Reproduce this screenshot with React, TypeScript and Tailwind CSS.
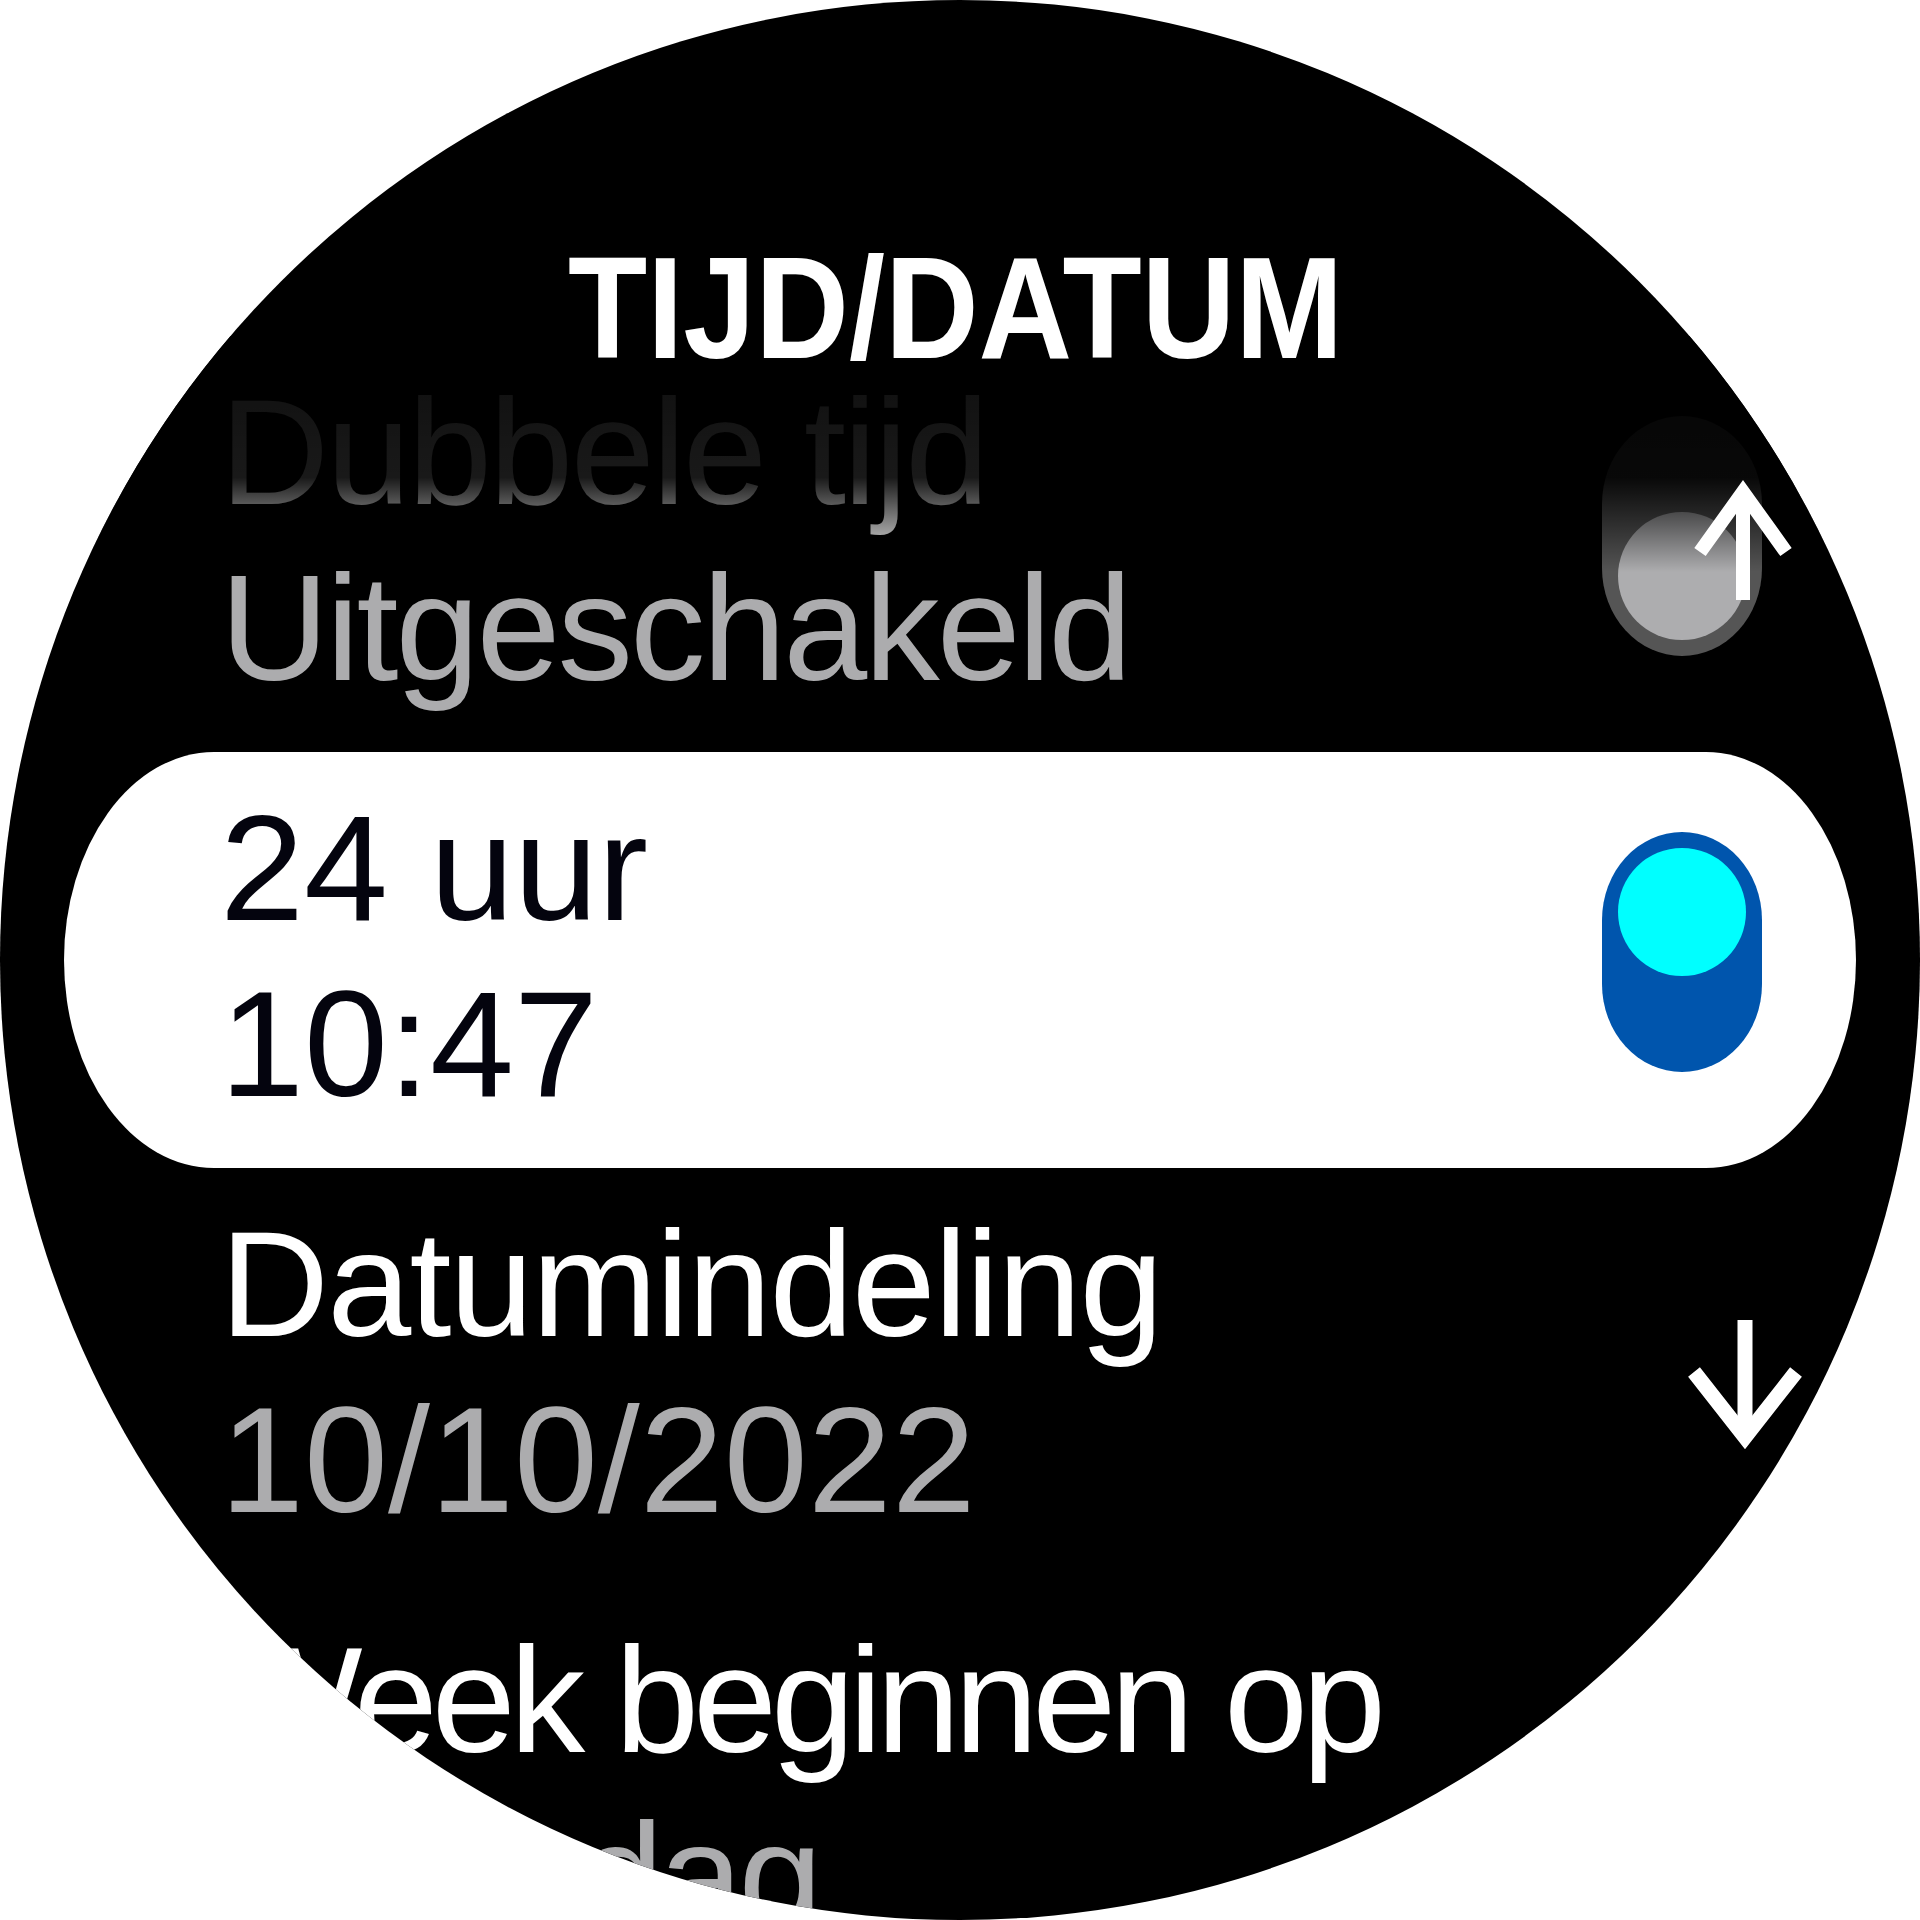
import type { ReactNode } from "react";

type Item = {
    title: string;
    value: string;
    toggle?: "on" | "off";
    selected?: boolean;
    titleTracking?: string;
    valueTracking?: string;
};

const items: Item[] = [
    { title: "Dubbele tijd", value: "Uitgeschakeld", toggle: "off", titleTracking: "tracking-[-0.017em]", valueTracking: "tracking-[-0.02em]" },
    { title: "24 uur", value: "10:47", toggle: "on", selected: true },
    { title: "Datumindeling", value: "10/10/2022", titleTracking: "tracking-[-0.012em]" },
    { title: "Week beginnen op", value: "Maandag", titleTracking: "tracking-[-0.04em]", valueTracking: "tracking-[-0.03em]" },
];

function Toggle({ on }: { on: boolean }) {
    if (on) {
        return (
            <div className="mb-[8px] flex h-[240px] w-[160px] shrink-0 flex-col justify-start rounded-[80px_/_88px] bg-[#0055ad] p-[16px]">
                <div className="h-[128px] w-[128px] rounded-full bg-[#00ffff]" />
            </div>
        );
    }
    return (
        <div className="mb-[8px] flex h-[240px] w-[160px] shrink-0 flex-col justify-end rounded-[80px_/_88px] bg-[#555555] p-[16px]">
            <div className="h-[128px] w-[128px] rounded-full bg-[#adadaf]" />
        </div>
    );
}

function Row({ item }: { item: Item }) {
    const main = item.selected ? "text-[#04040e]" : "text-white";
    const sub = item.selected ? "text-[#04040e]" : "text-[#acacae]";
    return (
        <div
            className={`flex h-[416px] items-center justify-between pt-[28px] pb-[36px] pl-[156px] pr-[94px] ${
                item.selected ? "rounded-[150px_/_208px] bg-white" : ""
            }`}
        >
            <div className="whitespace-nowrap text-[151px] leading-[176px]">
                <div className={`${main} ${item.titleTracking ?? ""}`}>{item.title}</div>
                <div className={`${sub} ${item.valueTracking ?? ""}`}>{item.value}</div>
            </div>
            {item.toggle && <Toggle on={item.toggle === "on"} />}
        </div>
    );
}

function Arrow({ className, children }: { className: string; children: ReactNode }) {
    return (
        <svg className={`absolute z-20 ${className}`} width="130" height="150" viewBox="0 0 130 150" fill="none">
            {children}
        </svg>
    );
}

export default function App() {
    return (
        <div className="h-[1920px] w-[1920px] bg-white">
            <div className="relative h-full w-full overflow-hidden rounded-full bg-black font-['Liberation_Sans',Arial,sans-serif]">
                <header className="relative z-20 h-[336px] pt-[237px] pr-[8px] text-center">
                    <h1 className="inline-block scale-x-[0.9] text-[144px] font-bold leading-[144px] text-white">
                        TIJD/DATUM
                    </h1>
                </header>

                <div className="px-[64px]">
                    {items.map((item) => (
                        <Row key={item.title} item={item} />
                    ))}
                </div>

                {/* list fades out under the title */}
                <div className="pointer-events-none absolute left-0 right-0 top-[336px] z-10 h-[236px] bg-[linear-gradient(to_bottom,rgba(0,0,0,0.95),rgba(0,0,0,0.9)_60%,rgba(0,0,0,0))]" />

                <Arrow className="left-[1680px] top-[470px]">
                    <line x1="63" y1="22" x2="63" y2="130" stroke="white" strokeWidth="14" />
                    <polyline points="20,82 63,22 106,82" stroke="white" strokeWidth="14" strokeLinejoin="miter" />
                </Arrow>
                <Arrow className="left-[1680px] top-[1310px]">
                    <line x1="65" y1="10" x2="65" y2="125" stroke="white" strokeWidth="15" />
                    <polyline points="14,62 65,127 116,62" stroke="white" strokeWidth="15" strokeLinejoin="miter" />
                </Arrow>
            </div>
        </div>
    );
}
